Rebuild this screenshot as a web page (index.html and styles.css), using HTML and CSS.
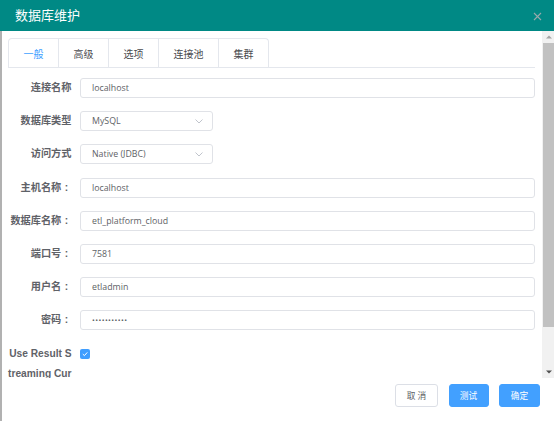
FILE: index.html
```html
<!DOCTYPE html>
<html lang="zh">
<head>
<meta charset="utf-8">
<title>数据库维护</title>
<link rel="stylesheet" href="styles.css">
</head>
<body>
<div class="dialog">
  <header class="dlg-head">
    <span class="dlg-title">数据库维护</span>
    <span class="dlg-close">
      <svg width="9" height="9" viewBox="0 0 9 9"><path d="M1 1L8 8M8 1L1 8" stroke="#98a9ab" stroke-width="1.1" fill="none"/></svg>
    </span>
  </header>
  <div class="dlg-body">
    <div class="scroll-area">
      <div class="content">
        <div class="tabs">
          <div class="tab-nav">
            <div class="tab active">一般</div>
            <div class="tab">高级</div>
            <div class="tab">选项</div>
            <div class="tab">连接池</div>
            <div class="tab">集群</div>
          </div>
        </div>
        <div class="form">
          <div class="row"><label class="lbl">连接名称</label><div class="input">localhost</div></div>
          <div class="row"><label class="lbl">数据库类型</label><div class="input select">MySQL<svg class="chev" width="8" height="5" viewBox="0 0 8 5"><path d="M0.5 0.5L4 4L7.5 0.5" stroke="#c0c4cc" fill="none"/></svg></div></div>
          <div class="row"><label class="lbl">访问方式</label><div class="input select">Native (JDBC)<svg class="chev" width="8" height="5" viewBox="0 0 8 5"><path d="M0.5 0.5L4 4L7.5 0.5" stroke="#c0c4cc" fill="none"/></svg></div></div>
          <div class="row"><label class="lbl">主机名称<span class="colon">:</span></label><div class="input">localhost</div></div>
          <div class="row"><label class="lbl">数据库名称<span class="colon">:</span></label><div class="input">etl_platform_cloud</div></div>
          <div class="row"><label class="lbl">端口号<span class="colon">:</span></label><div class="input">7581</div></div>
          <div class="row"><label class="lbl">用户名<span class="colon">:</span></label><div class="input">etladmin</div></div>
          <div class="row"><label class="lbl">密码<span class="colon">:</span></label><div class="input pwd">•••••••••••</div></div>
          <div class="row"><label class="lbl">Use Result Streaming Cursor</label><div class="check-wrap"><span class="checkbox"><svg width="8" height="8" viewBox="0 0 8 8"><path d="M1.8 4.1L3.4 5.6L6.3 2.4" stroke="#fff" stroke-width="1" fill="none"/></svg></span></div></div>
        </div>
      </div>
      <div class="scrollbar">
        <div class="sb-btn"><svg width="6" height="4" viewBox="0 0 6 4"><path d="M0 3.5L3 0.5L6 3.5Z" fill="#a3a3a3"/></svg></div>
        <div class="sb-track"><div class="sb-thumb"></div></div>
        <div class="sb-btn"><svg width="6" height="4" viewBox="0 0 6 4"><path d="M0 0.5L3 3.5L6 0.5Z" fill="#505050"/></svg></div>
      </div>
    </div>
    <div class="footer">
      <button class="btn">取 消</button>
      <button class="btn primary">测试</button>
      <button class="btn primary">确定</button>
    </div>
  </div>
</div>
</body>
</html>
```

FILE: styles.css
```css
* { box-sizing: border-box; }
html, body { margin: 0; padding: 0; }
body {
  width: 554px;
  height: 421px;
  overflow: hidden;
  background: #fff;
  font-family: "Open Sans", "Noto Sans CJK SC", sans-serif;
}
.dialog {
  width: 554px;
  height: 421px;
  display: flex;
  flex-direction: column;
}
.dlg-head {
  height: 31px;
  flex: none;
  background: #008985;
  display: flex;
  align-items: center;
  justify-content: space-between;
  padding: 0 15px;
}
.dlg-title {
  color: #fff;
  font-family: "Noto Sans CJK SC", sans-serif;
  font-size: 13px;
  line-height: 16px;
  margin-top: -1px;
}
.dlg-close {
  display: flex;
  margin-right: -3px;
  margin-top: 2px;
}
.dlg-body {
  flex: 1;
  display: flex;
  flex-direction: column;
  border-left: 2px solid #b1b1b1;
  min-height: 0;
}
.scroll-area {
  height: 347px;
  flex: none;
  display: flex;
  overflow: hidden;
}
.content {
  flex: 1;
  padding: 7px 7px 0 6px;
  overflow: hidden;
}
.tabs {
  display: flex;
  border-bottom: 1px solid #e4e7ed;
  height: 30px;
}
.tab-nav {
  display: flex;
  border: 1px solid #e4e7ed;
  border-bottom: none;
  border-radius: 4px 4px 0 0;
  height: 30px;
}
.tab {
  padding: 0 14.5px;
  height: 29px;
  line-height: 29px;
  font-family: "Noto Sans CJK SC", sans-serif;
  font-size: 10px;
  color: #4a4b4f;
  border-left: 1px solid #e4e7ed;
  border-bottom: 1px solid transparent;
}
.tab:first-child { border-left: none; }
.tab.active {
  color: #409eff;
  border-bottom-color: #fff;
  height: 30px;
}
.form {
  padding-top: 10px;
}
.row {
  display: flex;
  align-items: flex-start;
  margin-bottom: 13.2px;
}
.lbl {
  flex: none;
  width: 64px;
  margin-left: -0.5px;
  margin-right: 8.5px;
  text-align: right;
  font-family: "Liberation Sans", "Noto Sans CJK SC", sans-serif;
  font-weight: bold;
  font-size: 10.2px;
  line-height: 20px;
  color: #5f6268;
  word-break: break-all;
}
.colon {
  display: inline-block;
  width: 1em;
  text-align: center;
}
.input {
  flex: 1;
  height: 20px;
  border: 1px solid #e0e2e7;
  border-radius: 3px;
  padding-left: 11px;
  font-size: 8.8px;
  line-height: 18px;
  color: #606266;
  display: flex;
  align-items: center;
  white-space: nowrap;
}
.select {
  flex: none;
  width: 133px;
  justify-content: space-between;
  padding-right: 9px;
}
.chev { flex: none; }
.pwd {
  font-size: 7.5px;
  letter-spacing: 0.4px;
}
.check-wrap {
  height: 20px;
  display: flex;
  align-items: center;
  padding-top: 1px;
}
.checkbox {
  width: 10px;
  height: 10px;
  border-radius: 2px;
  background: #409eff;
  display: flex;
  align-items: center;
  justify-content: center;
}
.scrollbar {
  width: 12px;
  flex: none;
  background: #f1f1f1;
  display: flex;
  flex-direction: column;
}
.sb-btn {
  height: 12px;
  flex: none;
  display: flex;
  align-items: center;
  justify-content: center;
  padding-left: 1px;
}
.sb-track {
  flex: 1;
  padding-left: 1px;
}
.sb-thumb {
  height: 284px;
  background: #c1c1c1;
}
.footer {
  flex: 1;
  display: flex;
  justify-content: flex-end;
  align-items: flex-start;
  padding: 6px 14px 0 0;
  gap: 10.5px;
}
.btn {
  height: 23px;
  border: 1px solid #dcdfe6;
  border-radius: 3px;
  background: #fff;
  color: #606266;
  font-family: "Noto Sans CJK SC", sans-serif;
  font-size: 8.7px;
  padding: 0;
  width: 43px;
  cursor: pointer;
}
.btn.primary {
  background: #42a0ff;
  border-color: #42a0ff;
  color: #fff;
  width: 40px;
}
.btn.primary:last-child { width: 41px; }
```
